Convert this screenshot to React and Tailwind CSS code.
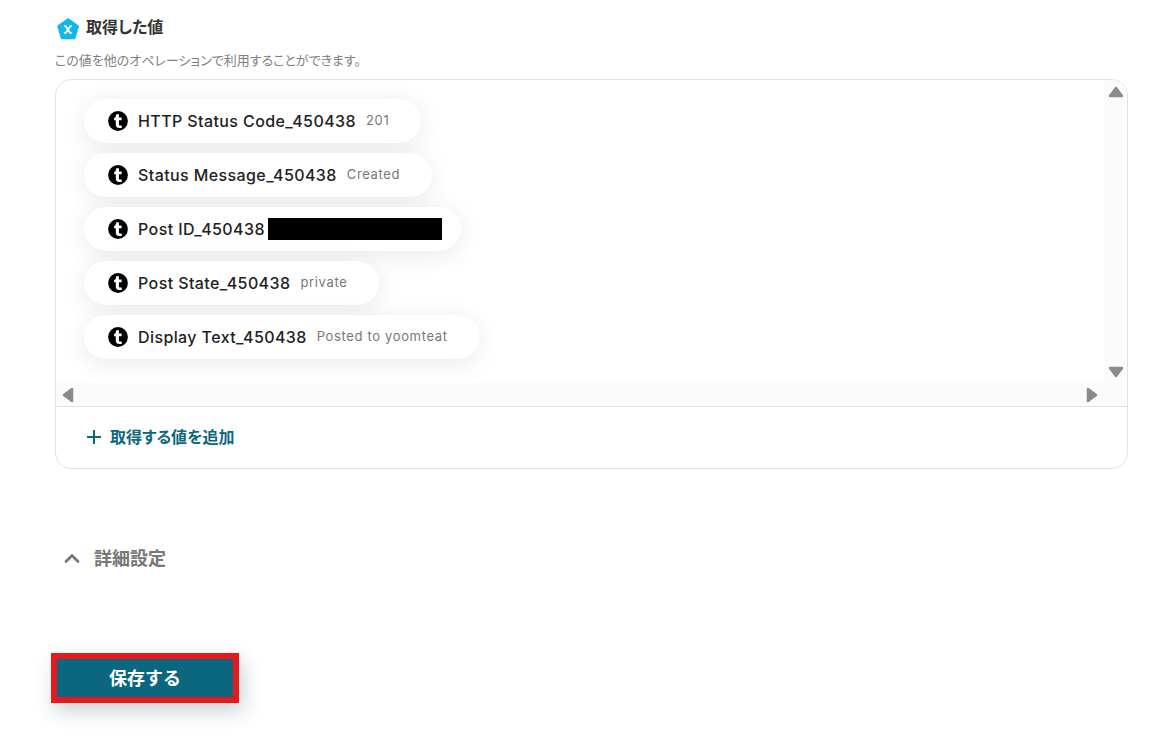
const outputs = [
  { name: "HTTP Status Code_450438", value: "201" },
  { name: "Status Message_450438", value: "Created" },
  { name: "Post ID_450438", masked: true },
  { name: "Post State_450438", value: "private" },
  { name: "Display Text_450438", value: "Posted to yoomteat" },
];

function VariableIcon() {
  return (
    <svg viewBox="0 0 24 24" className="size-6 shrink-0" aria-hidden="true">
      <path
        d="M13 4 22.2 10.6 19 21.5 H7.4 L4 10.6 Z"
        fill="#12b8ea"
        stroke="#12b8ea"
        strokeWidth="3.4"
        strokeLinejoin="round"
      />
      <path
        d="M9.2 10.2h1.5l4.2 6.6h2M16.8 10.2h-1.4l-4.8 6.6H8.9"
        fill="none"
        stroke="#fff"
        strokeWidth="1.7"
      />
    </svg>
  );
}

function TumblrIcon() {
  return (
    <svg viewBox="0 0 20 20" className="size-5 shrink-0" aria-hidden="true">
      <circle cx="10" cy="10" r="9.9" fill="#000" />
      <path
        d="M8.2 3.2h2.7v3.4h2.7v2.7h-2.7v3.6c0 1 .5 1.5 1.4 1.5h1.4v2.7h-2.3c-2.3 0-3.6-1.3-3.6-3.3V9.3H6.1V7.1c1.3-.5 2-1.7 2.1-3.9Z"
        fill="#fff"
      />
    </svg>
  );
}

function Arrow({ className }) {
  return (
    <svg viewBox="0 0 16 12" className={className} aria-hidden="true">
      <path
        d="M8 2 14 10H2Z"
        fill="#8b8b8b"
        stroke="#8b8b8b"
        strokeWidth="2.5"
        strokeLinejoin="round"
      />
    </svg>
  );
}

function OutputPill({ name, value, masked }) {
  return (
    <li
      className={`flex h-11 items-center rounded-full bg-white pl-6 shadow-[0_4px_24px_rgba(0,0,0,0.09)] ${
        masked ? "pr-[19px]" : "pr-8"
      }`}
    >
      <TumblrIcon />
      <span className="ml-2.5 text-base font-medium text-[#222]">{name}</span>
      {masked ? (
        <span className="ml-[3px] h-[22px] w-[174px] bg-black" />
      ) : (
        <span className="ml-2.5 text-[13px] tracking-wider text-[#777]">{value}</span>
      )}
    </li>
  );
}

export default function App() {
  return (
    <main className="min-h-screen bg-white pr-[45px] pb-12 pl-[55px] pt-4 font-['Inter','Noto_Sans_CJK_JP',sans-serif] tracking-wide">
      <section>
        <div className="flex h-6 items-center gap-[7px]">
          <VariableIcon />
          <h2 className="pb-0.5 text-base font-semibold tracking-normal text-[#333] [font-feature-settings:'palt']">
            取得した値
          </h2>
        </div>
        <p className="mt-2 text-[13px] leading-6 tracking-normal text-[#808080] [font-feature-settings:'palt']">
          この値を他のオペレーションで利用することができます。
        </p>

        <div className="mt-[7px] overflow-hidden rounded-2xl border border-[#e2e2e2]">
          <div className="grid grid-cols-[1fr_23px] grid-rows-[1fr_23px] border-b border-[#e2e2e2]">
            <ul className="flex flex-col items-start gap-[10px] overflow-hidden pt-[19px] pb-6 pl-7">
              {outputs.map((item) => (
                <OutputPill key={item.name} {...item} />
              ))}
            </ul>
            <div className="flex flex-col items-center justify-between bg-[#fbfbfb] pt-1.5 pb-[5px]">
              <Arrow className="h-3 w-4" />
              <Arrow className="h-3 w-4 rotate-180" />
            </div>
            <div className="flex items-center justify-between bg-[#fbfbfb] px-1">
              <Arrow className="h-3 w-4 -rotate-90" />
              <Arrow className="h-3 w-4 rotate-90" />
            </div>
            <div className="bg-[#fbfbfb]" />
          </div>

          <button
            type="button"
            className="flex h-[61px] items-center gap-2 pb-0.5 pl-[30px] text-base font-semibold tracking-normal text-[#0b6780] [font-feature-settings:'palt']"
          >
            <svg viewBox="0 0 16 16" className="size-4" aria-hidden="true">
              <path d="M8 1v14M1 8h14" stroke="currentColor" strokeWidth="2" />
            </svg>
            取得する値を追加
          </button>
        </div>
      </section>

      <button
        type="button"
        className="mt-[78px] ml-2 flex h-6 items-center gap-[13px] text-lg font-semibold tracking-normal text-[#777]"
      >
        <svg viewBox="0 0 18 18" className="size-[18px]" aria-hidden="true">
          <path
            d="m3 11.5 6-6 6 6"
            fill="none"
            stroke="currentColor"
            strokeWidth="2.8"
            strokeLinecap="round"
            strokeLinejoin="round"
          />
        </svg>
        詳細設定
      </button>

      <button
        type="button"
        className="mt-[82px] -ml-1 h-[50px] w-[188px] border-6 border-[#e7191c] bg-[#0b6780] pt-0.5 text-lg font-bold tracking-normal text-white shadow-[4px_8px_20px_rgba(20,40,60,0.22)]"
      >
        保存する
      </button>
    </main>
  );
}
